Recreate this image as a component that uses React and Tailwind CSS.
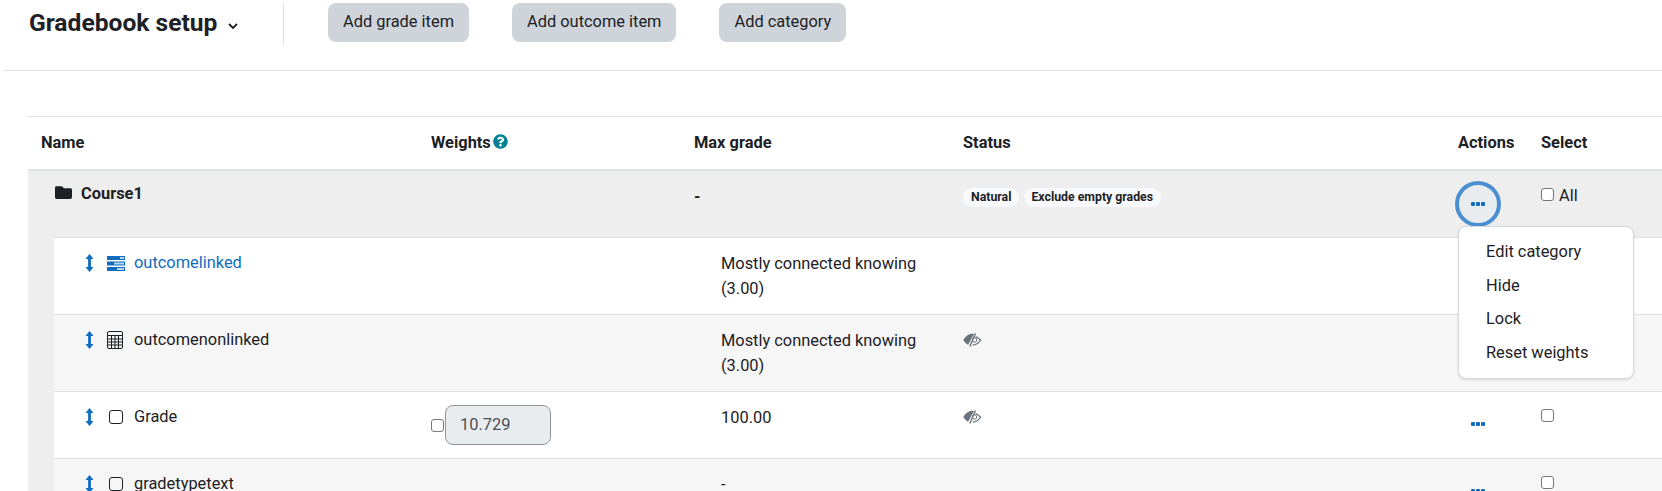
import React from "react";
import { FaFolder, FaQuestionCircle } from "react-icons/fa";

const ReorderIcon = () => (
  <svg width="9" height="18" viewBox="0 0 9 18" className="text-[#0f6cbf]" fill="currentColor">
    <path d="M4.5 0 L8.5 5 H5.9 V13 H8.5 L4.5 18 L0.5 13 H3.1 V5 H0.5 Z" />
  </svg>
);

const OutcomeIcon = () => (
  <svg width="18" height="15" viewBox="0 0 18 15">
    <rect width="18" height="4" fill="#0f6cbf" />
    <rect y="5.5" width="18" height="4" fill="#0f6cbf" />
    <rect y="11" width="18" height="4" fill="#0f6cbf" />
    <rect x="13" y="1" width="4" height="2" fill="#b7d3ec" />
    <rect x="7" y="6.5" width="10" height="2" fill="#b7d3ec" />
    <rect x="10" y="12" width="7" height="2" fill="#b7d3ec" />
  </svg>
);

const CalcIcon = () => (
  <svg width="16" height="18" viewBox="0 0 16 18" fill="none" stroke="#1d2125">
    <rect x="0.5" y="0.5" width="15" height="17" rx="1.5" />
    <path d="M1 4.5 H15 M1 8 H15 M1 11 H15 M1 14 H15 M4.5 5 V17 M8 5 V17 M11.5 5 V17" />
  </svg>
);

const ItemIcon = () => (
  <div className="ml-[2px] w-[14px] h-[14px] border-[1.5px] border-[#1d2125] rounded-[3px]" />
);

const HiddenIcon = () => (
  <svg width="18" height="14" viewBox="0 0 18 14">
    <path d="M11 1 C6.5 0.2 2.5 3.2 0.3 7 C1.5 9.2 3.2 10.8 5.2 11.8 L11 1 Z" fill="#6a737b" />
    <path d="M12.5 0.5 L6.8 13.5" stroke="#6a737b" strokeWidth="1.4" />
    <path d="M12.6 3.6 C14.6 4.4 16.2 5.6 17.6 7 C15.6 10 13 11.8 9.6 12.2" fill="none" stroke="#6a737b" strokeWidth="1.3" />
    <circle cx="11.5" cy="7" r="2.2" fill="none" stroke="#6a737b" strokeWidth="1" />
  </svg>
);

const Dots = () => (
  <svg width="14" height="4" viewBox="0 0 14 4" fill="#0f6cbf">
    <rect width="4" height="4" rx="1" />
    <rect x="5" width="4" height="4" rx="1" />
    <rect x="10" width="4" height="4" rx="1" />
  </svg>
);

const Check = () => (
  <div className="w-[13px] h-[13px] bg-white border border-[#767676] rounded-[3px] shrink-0" />
);

const Rows = [
  { name: "outcomelinked", icon: <OutcomeIcon />, link: true, grade: "Mostly connected knowing (3.00)", bg: "bg-white", h: "h-[77px]" },
  { name: "outcomenonlinked", icon: <CalcIcon />, grade: "Mostly connected knowing (3.00)", hidden: true, bg: "bg-[#f6f6f6]", h: "h-[77px]" },
  { name: "Grade", icon: <ItemIcon />, grade: "100.00", hidden: true, weight: "10.729", actions: true, bg: "bg-white", h: "h-[67px]" },
  { name: "gradetypetext", icon: <ItemIcon />, grade: "-", actions: true, bg: "bg-[#f6f6f6]", h: "h-[67px]" },
];

const App = () => {
  return (
    <div className="h-[491px] w-[1662px] overflow-hidden bg-white text-[#1d2125] font-['Roboto',sans-serif] text-[16.4px]">

      {/* Page header */}
      <header className="ml-[3px] h-[71px] border-b border-[#dee2e6] flex items-start pt-[3px]">
        <div className="w-[281px] h-[42px] flex items-center pl-[26px] border-r border-[#dee2e6]">
          <h1 className="text-[24.6px] font-bold leading-[38px] mb-[2px]">Gradebook setup</h1>
          <svg width="10" height="6" viewBox="0 0 10 6" className="ml-[11px] mt-[4px]" fill="none" stroke="#1d2125" strokeWidth="1.8">
            <path d="M1 1 L5 5 L9 1" />
          </svg>
        </div>
        <div className="flex gap-[43px] ml-[44px]">
          {["Add grade item", "Add outcome item", "Add category"].map((label) => (
            <button key={label} className="h-[39px] px-[15px] pb-[2px] rounded-[8px] bg-[#ced4da] leading-[24px]">
              {label}
            </button>
          ))}
        </div>
      </header>

      {/* Grade table */}
      <section className="ml-[28px] mt-[45px] border-t border-[#dee2e6]">
        <div className="flex h-[54px] items-center font-bold border-b-2 border-[#dee2e6]">
          <div className="w-[390px] pl-[13px]">Name</div>
          <div className="w-[263px] pl-[13px] flex items-center gap-[2px]">
            Weights <FaQuestionCircle className="text-[#008196] text-[15px] mb-[2px]" />
          </div>
          <div className="w-[270px] pl-[13px]">Max grade</div>
          <div className="w-[494px] pl-[12px]">Status</div>
          <div className="w-[84px] pl-[13px]">Actions</div>
          <div className="pl-[12px]">Select</div>
        </div>

        <div className="bg-[#eeeeee]">
          <div className="flex h-[66px] pt-[10px]">
            <div className="w-[390px] pl-[27px] flex items-start gap-[9px] font-bold">
              <FaFolder className="text-[17px] mt-[3px]" />
              <span className="leading-[26px]">Course1</span>
            </div>
            <div className="w-[263px]" />
            <div className="w-[270px] pl-[13px] font-bold leading-[24px] pt-[4px]">-</div>
            <div className="w-[494px] pl-[12px] flex items-start gap-[5px] pt-[7px]">
              <span className="h-[19px] px-[8px] rounded-full bg-[#f8f9fa] text-[12.3px] font-bold leading-[19px]">Natural</span>
              <span className="h-[19px] pl-[7px] pr-[8px] rounded-full bg-[#f8f9fa] text-[12.3px] font-bold leading-[19px]">Exclude empty grades</span>
            </div>
            <div className="w-[84px] pl-[10px] relative">
              <div className="w-[46px] h-[46px] rounded-full border-4 border-[#4a90d0] bg-[#e9ecef] flex items-center justify-center">
                <Dots />
              </div>
              <div className="absolute z-10 left-[13px] top-[45px] w-[176px] h-[153px] bg-white border border-[#d5d8dc] rounded-[8px] shadow-sm pt-[8px] pl-[27px]">
                {["Edit category", "Hide", "Lock", "Reset weights"].map((item) => (
                  <div key={item} className="h-[33.5px] leading-[33.5px]">{item}</div>
                ))}
              </div>
            </div>
            <div className="pl-[12px] flex items-start gap-[5px] pt-[2px]">
              <div className="mt-[5px]"><Check /></div>
              <span className="leading-[25px]">All</span>
            </div>
          </div>

          {Rows.map((row) => (
            <div key={row.name} className={`ml-[26px] flex border-t border-[#dee2e6] pt-[13px] ${row.bg} ${row.h}`}>
              <div className="w-[364px] pl-[31px] flex items-start">
                <div className="w-[22px] pt-[3px]"><ReorderIcon /></div>
                <div className="w-[27px] h-[24px] flex items-center">{row.icon}</div>
                <span className={`leading-[24px] ${row.link ? "text-[#0f6cbf]" : ""}`}>{row.name}</span>
              </div>
              <div className="w-[263px] pl-[13px]">
                {row.weight && (
                  <div className="flex items-center">
                    <Check />
                    <div className="ml-[1px] w-[106px] h-[40px] bg-[#e9ecef] border border-[#8f959e] rounded-[8px] pl-[14px] leading-[38px] text-[#495057]">
                      {row.weight}
                    </div>
                  </div>
                )}
              </div>
              <div className="w-[270px] pl-[40px] pr-[30px] leading-[25px]">{row.grade}</div>
              <div className="w-[494px] pl-[12px] pt-[5px]">{row.hidden && <HiddenIcon />}</div>
              <div className="w-[84px] pl-[26px] pt-[17px]">{row.actions && <Dots />}</div>
              <div className="pl-[12px] pt-[4px]">{row.actions && <Check />}</div>
            </div>
          ))}
        </div>
      </section>
    </div>
  );
};

export default App;
